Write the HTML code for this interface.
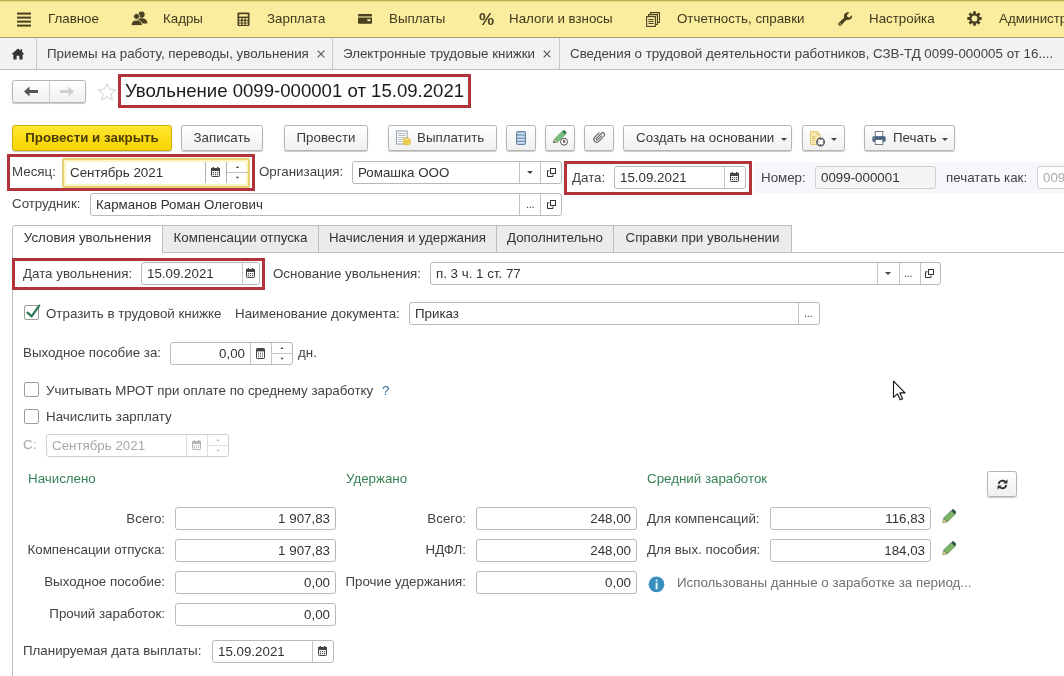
<!DOCTYPE html>
<html lang="ru"><head><meta charset="utf-8">
<style>
*{box-sizing:border-box;margin:0;padding:0}
html,body{width:1064px;height:676px;overflow:hidden;background:#fff}
body{will-change:transform;font-family:"Liberation Sans",Arial,sans-serif;font-size:13.33px;color:#424242;position:relative}
.a{position:absolute;white-space:nowrap}
.t{position:absolute;white-space:nowrap;line-height:16px;height:16px}
#menu{left:0;top:0;width:1064px;height:38px;background:#fbed9e;border-top:1px solid #bfae55;box-shadow:inset 0 1px 0 #e9d985;border-bottom:1px solid #aaa066}
#tabs{left:0;top:38px;width:1064px;height:32px;background:#f1f2f3;border-bottom:1px solid #bdbdbd}
.sep{position:absolute;top:38px;width:1px;height:31px;background:#c9c9c9}
.btn{position:absolute;height:26px;border:1px solid #b4b4b4;border-radius:2.5px;background:linear-gradient(#fff,#f0f0f0);box-shadow:0 1px 1px rgba(0,0,0,.22);text-align:center;line-height:24px;white-space:nowrap;color:#3a3a3a}
.inp{position:absolute;height:23px;border:1px solid #b9b9b9;border-radius:3px;background:#fff;line-height:21px;padding-left:5px;white-space:nowrap;color:#333;overflow:hidden}
.inp.r{text-align:right;padding-right:5px;padding-left:0}
.vs{position:absolute;top:0;width:1px;height:21px;background:#c4c4c4}
.red{position:absolute;border:3px solid #b1333c}
.tab{position:absolute;top:225px;height:27px;border:1px solid #bdbdbd;border-bottom:none;background:#ebebeb;line-height:24px;text-align:center;white-space:nowrap;color:#333}
.grn{color:#37835a}
.cb{position:absolute;width:15px;height:15px;border:1px solid #9d9d9d;border-radius:2px;background:#fff}
</style></head><body>
<div id="menu" class="a"></div>
<div id="tabs" class="a"></div>

<!-- menu text -->
<div class="t" style="left:48px;top:11px;color:#40391f">Главное</div>
<div class="t" style="left:163px;top:11px;color:#40391f">Кадры</div>
<div class="t" style="left:267px;top:11px;color:#40391f">Зарплата</div>
<div class="t" style="left:389px;top:11px;color:#40391f">Выплаты</div>
<div class="t" style="left:509px;top:11px;color:#40391f">Налоги и взносы</div>
<div class="t" style="left:677px;top:11px;color:#40391f">Отчетность, справки</div>
<div class="t" style="left:869px;top:11px;color:#40391f">Настройка</div>
<div class="t" style="left:999px;top:11px;color:#40391f">Администрирование</div>

<!-- tabs text -->
<div class="sep" style="left:36px"></div>
<div class="t" style="left:47px;top:46px">Приемы на работу, переводы, увольнения</div>
<svg class="a" style="left:317px;top:50px" width="8" height="8" viewBox="0 0 8 8"><path d="M0.7 0.7 L7.3 7.3 M7.3 0.7 L0.7 7.3" stroke="#555" stroke-width="1.1" fill="none"/></svg>
<div class="sep" style="left:332px"></div>
<div class="t" style="left:343px;top:46px">Электронные трудовые книжки</div>
<svg class="a" style="left:543px;top:50px" width="8" height="8" viewBox="0 0 8 8"><path d="M0.7 0.7 L7.3 7.3 M7.3 0.7 L0.7 7.3" stroke="#555" stroke-width="1.1" fill="none"/></svg>
<div class="sep" style="left:559px"></div>
<div class="t" style="left:570px;top:46px">Сведения о трудовой деятельности работников, СЗВ-ТД 0099-000005 от 16....</div>



<!-- menu icons -->
<svg class="a" style="left:17px;top:12px" width="14" height="15" viewBox="0 0 14 15"><g fill="#4a4022"><rect x="0" y="0.6" width="14" height="2"/><rect x="0" y="4.6" width="14" height="2"/><rect x="0" y="8.6" width="14" height="2"/><rect x="0" y="12.6" width="14" height="2"/></g></svg>
<svg class="a" style="left:131px;top:11px" width="17" height="15" viewBox="0 0 17 15"><g fill="#4a4022"><circle cx="10.6" cy="3.6" r="3.1"/><path d="M5.5 12.5 C5.5 8.5 8 7.2 10.6 7.2 C13.3 7.2 16.3 8.5 16.3 12 L16.3 12.6 Z"/><circle cx="5.6" cy="5.4" r="3" stroke="#fbed9e" stroke-width="0.8"/><path d="M0.3 14.6 C0.3 10.4 2.6 9.2 5.6 9.2 C8.6 9.2 11.2 10.4 11.2 14.6 Z" stroke="#fbed9e" stroke-width="0.8"/></g></svg>
<svg class="a" style="left:237px;top:12px" width="13" height="15" viewBox="0 0 13 15"><rect x="0.5" y="0.5" width="12" height="13.6" rx="1" fill="#4a4022"/><rect x="2.2" y="2.2" width="8.6" height="2.4" fill="#fbed9e"/><g fill="#fbed9e"><rect x="2.2" y="6" width="2" height="1.8"/><rect x="5.5" y="6" width="2" height="1.8"/><rect x="8.8" y="6" width="2" height="1.8"/><rect x="2.2" y="8.8" width="2" height="1.8"/><rect x="5.5" y="8.8" width="2" height="1.8"/><rect x="8.8" y="8.8" width="2" height="1.8"/><rect x="2.2" y="11.4" width="2" height="1.6"/><rect x="5.5" y="11.4" width="2" height="1.6"/><rect x="8.8" y="11.4" width="2" height="1.6"/></g></svg>
<svg class="a" style="left:358px;top:14px" width="14" height="10.3" viewBox="0 0 15 11"><rect x="0" y="0" width="15" height="10.5" rx="1.2" fill="#4a4022"/><rect x="0" y="2.6" width="15" height="1.2" fill="#fbed9e"/><rect x="10" y="5.6" width="3.4" height="2" fill="#fbed9e"/></svg>
<div class="a" style="left:479px;top:8.5px;font-weight:bold;font-size:17px;line-height:22px;color:#4a4022">%</div>
<svg class="a" style="left:646px;top:12px" width="14" height="15" viewBox="0 0 14 15"><g fill="none" stroke="#4a4022" stroke-width="1.1"><path d="M4.5 2.5 V0.6 H13.4 V10.5 H11.5"/><path d="M2.5 4.5 V2.6 H11.4 V12.5 H9.5"/><rect x="0.6" y="4.6" width="8.8" height="9.8"/><path d="M2.4 7.5 H7.6 M2.4 9.5 H7.6 M2.4 11.5 H7.6"/></g></svg>
<svg class="a" style="left:837.5px;top:12.3px" width="14.6" height="14.2" viewBox="0 0 17 16"><path d="M16.2 3.4 L13.4 6.2 L11 5.6 L10.4 3.2 L13.2 0.4 C11.2 -0.3 9 0.3 7.8 1.9 C6.8 3.3 6.6 5 7.2 6.4 L0.9 12.2 C0 13.1 0 14.4 0.9 15.2 C1.8 16 3.1 16 3.9 15.2 L9.8 8.9 C11.4 9.5 13.3 9.2 14.7 8 C16.1 6.8 16.8 5 16.2 3.4 Z" fill="#4a4022"/><circle cx="2.5" cy="13.6" r="0.9" fill="#fbed9e"/></svg>
<svg class="a" style="left:967px;top:11px" width="15" height="15" viewBox="-7.5 -7.5 15 15"><g fill="#4a4022"><g id="gt"><rect x="-1.4" y="-7.2" width="2.8" height="14.4" rx="0.5"/></g><rect x="-1.4" y="-7.2" width="2.8" height="14.4" rx="0.5" transform="rotate(45)"/><rect x="-1.4" y="-7.2" width="2.8" height="14.4" rx="0.5" transform="rotate(90)"/><rect x="-1.4" y="-7.2" width="2.8" height="14.4" rx="0.5" transform="rotate(135)"/><circle r="5.2"/></g><circle r="2.9" fill="#fbed9e"/></svg>
<!-- home -->
<svg class="a" style="left:11px;top:48px" width="14" height="12" viewBox="0 0 16 14"><path d="M8 0.5 L0.3 7.4 H2.6 V13.5 H6.4 V9 H9.6 V13.5 H13.4 V7.4 H15.7 L12.8 4.8 V1.4 H11 V3.2 Z" fill="#333"/></svg>
<!-- nav buttons -->
<div class="btn" style="left:12px;top:80px;width:74px;height:23px"></div>
<div class="a" style="left:49px;top:81px;width:1px;height:21px;background:#d0d0d0"></div>
<svg class="a" style="left:23px;top:85px" width="16" height="13" viewBox="0 0 16 13"><path d="M1 6.5 L6.5 1.5 V5 H15 V8 H6.5 V11.5 Z" fill="#555"/></svg>
<svg class="a" style="left:59px;top:85px" width="16" height="13" viewBox="0 0 16 13"><path d="M15 6.5 L9.5 1.5 V5 H1 V8 H9.5 V11.5 Z" fill="#d0d0d0"/></svg>
<svg class="a" style="left:97px;top:82px" width="20" height="19" viewBox="0 0 20 19"><path d="M10 1.5 L12.5 7.2 L18.7 7.8 L14 11.9 L15.4 18 L10 14.8 L4.6 18 L6 11.9 L1.3 7.8 L7.5 7.2 Z" fill="#fff" stroke="#d9d9d9" stroke-width="1.2" stroke-linejoin="round"/></svg>
<div class="red" style="left:118px;top:74px;width:353px;height:34px;border-width:3px"></div>
<div class="a" style="left:125px;top:79px;font-size:18.6px;line-height:24px;color:#1a1a1a">Увольнение 0099-000001 от 15.09.2021</div>

<!-- command bar -->
<div class="btn" style="left:12px;top:125px;width:160px;background:linear-gradient(#ffe630,#f7d400);border-color:#c9ad00;font-weight:bold;color:#4a3c00">Провести и закрыть</div>
<div class="btn" style="left:181px;top:125px;width:82px">Записать</div>
<div class="btn" style="left:284px;top:125px;width:84px">Провести</div>
<div class="btn" style="left:388px;top:125px;width:109px;text-align:left;padding-left:28px">Выплатить</div>
<div class="btn" style="left:506px;top:125px;width:30px"></div>
<div class="btn" style="left:545px;top:125px;width:30px"></div>
<div class="btn" style="left:584px;top:125px;width:30px"></div>
<div class="btn" style="left:623px;top:125px;width:169px;text-align:left;padding-left:12px">Создать на основании</div>
<div class="btn" style="left:802px;top:125px;width:43px"></div>
<div class="btn" style="left:864px;top:125px;width:91px;text-align:left;padding-left:28px">Печать</div>


<!-- cmd icons -->
<svg class="a" style="left:396px;top:130px" width="16" height="16" viewBox="0 0 16 16"><rect x="0.5" y="1" width="10.6" height="13" fill="#fcfcfd" stroke="#93a0b0" stroke-width="1"/><path d="M2.2 3.5 H9.4 M2.2 5.5 H9.4 M2.2 7.5 H9.4 M2.2 9.5 H6.5 M2.2 11.5 H6" stroke="#a9b3bf" stroke-width="0.9"/><g fill="#f7dc6a" stroke="#d3a92a" stroke-width="0.6"><ellipse cx="10.8" cy="13.2" rx="3.8" ry="1.7"/><ellipse cx="10.8" cy="11.4" rx="3.8" ry="1.7"/><ellipse cx="10.8" cy="9.6" rx="3.8" ry="1.7"/></g></svg>
<svg class="a" style="left:516px;top:131px" width="10" height="14" viewBox="0 0 10 14"><rect x="0.5" y="0.5" width="9" height="13" rx="1.2" fill="#6d8fb0" stroke="#6687a8"/><g fill="#cfe1f1"><rect x="1.2" y="1.4" width="7.6" height="2"/><rect x="1.2" y="4.6" width="7.6" height="2"/><rect x="1.2" y="7.8" width="7.6" height="2"/><rect x="1.2" y="11" width="7.6" height="1.8"/></g></svg>
<svg class="a" style="left:552px;top:129px" width="20" height="20" viewBox="0 0 20 20"><path d="M1.4 13.6 L2.6 10 L10.2 2.4 L13.2 5.4 L5.6 13 Z" fill="#79bd7b" stroke="#4f9a5c" stroke-width="0.7"/><path d="M10.2 2.4 L11.2 1.4 C11.6 1 12.2 1 12.6 1.4 L14.2 3 C14.6 3.4 14.6 4 14.2 4.4 L13.2 5.4 Z" fill="#2f7d4b"/><path d="M1.4 13.6 L2.6 10 L5.6 13 Z" fill="#e9dcb4" stroke="#7a6a45" stroke-width="0.5"/><path d="M1.4 13.6 L2 11.9 L3.3 13.1 Z" fill="#444"/><circle cx="12" cy="12.7" r="3.5" fill="#fff" stroke="#444" stroke-width="0.9"/><path d="M11.8 10.8 V13 H13.6" fill="none" stroke="#222" stroke-width="1.2"/></svg>
<svg class="a" style="left:591px;top:129px" width="16" height="16" viewBox="-8 -8 16 16"><path transform="rotate(45)" d="M-2.9 -3 V3.2 A2.9 2.9 0 0 0 2.9 3.2 V-4.3 A1.9 1.9 0 0 0 -0.9 -4.3 V2.9 A0.95 0.95 0 0 0 1 2.9 V-2.6" fill="none" stroke="#555" stroke-width="1" stroke-linecap="round"/></svg>
<svg class="a" style="left:780.5px;top:137.5px" width="6" height="3" viewBox="0 0 6 3"><path d="M0 0 H6 L3 3 Z" fill="#444"/></svg>
<svg class="a" style="left:810px;top:130.5px" width="16" height="16" viewBox="0 0 16 16"><path d="M0.5 0.5 H7 L10 3.5 V13.5 H0.5 Z" fill="#f8e9b0" stroke="#dcc46c" stroke-width="0.9"/><path d="M7 0.5 V3.5 H10" fill="none" stroke="#dcc46c" stroke-width="0.9"/><path d="M2.4 5.5 H5 M2.4 7.5 H5.5 M2.4 9.5 H4.5" stroke="#cdb45a" stroke-width="0.9"/><circle cx="10.6" cy="11" r="3.7" fill="#fff" stroke="#5a5f6a" stroke-width="1.5"/><path d="M10.6 7.2 V9 M10.6 13 V14.8 M6.8 11 H8.6 M12.6 11 H14.4" stroke="#5a5f6a" stroke-width="1.1"/></svg>
<svg class="a" style="left:830.5px;top:137.5px" width="6" height="3" viewBox="0 0 6 3"><path d="M0 0 H6 L3 3 Z" fill="#444"/></svg>
<svg class="a" style="left:872px;top:130.5px" width="14" height="14" viewBox="0 0 14 14"><rect x="3.2" y="0.5" width="7.6" height="5.5" fill="#fff" stroke="#5d6d7e" stroke-width="0.9"/><rect x="0.4" y="5.2" width="13.2" height="5.6" rx="1.3" fill="#47637f"/><rect x="3.2" y="8.4" width="7.6" height="5.1" fill="#fff" stroke="#5d6d7e" stroke-width="0.9"/><rect x="1.6" y="6.4" width="1.2" height="1" fill="#b9d0e4"/></svg>
<svg class="a" style="left:941.5px;top:137.5px" width="6" height="3" viewBox="0 0 6 3"><path d="M0 0 H6 L3 3 Z" fill="#444"/></svg>
<!-- row 2 -->
<div class="red" style="left:7px;top:154px;width:248px;height:37px;border-width:3px"></div>
<div class="t" style="left:12px;top:164px">Месяц:</div>
<div class="inp" style="left:62px;top:158px;width:188px;height:30px;border:2px solid #e8d274;border-radius:2px;box-shadow:inset 0 0 0 2px #fdf4c4;line-height:25px;padding-left:6px">Сентябрь 2021
  <div class="vs" style="left:141px;top:2px;height:21px;background:#b0b0b0"></div><div class="vs" style="left:162px;top:2px;height:21px;background:#b0b0b0"></div>
</div>
<div class="t" style="left:259px;top:164px">Организация:</div>
<div class="inp" style="left:352px;top:161px;width:210px">Ромашка ООО<div class="vs" style="left:166px"></div><div class="vs" style="left:187px"></div></div>
<div class="t" style="left:12px;top:196px">Сотрудник:</div>
<div class="inp" style="left:90px;top:193px;width:472px">Карманов Роман Олегович<div class="vs" style="left:428px"></div><div class="vs" style="left:449px"></div><div class="a" style="left:435px;top:0px;color:#444;font-size:11px;letter-spacing:-0.3px">...</div></div>

<div class="red" style="left:564px;top:161px;width:188px;height:34px;border-width:3px"></div>
<div class="t" style="left:572px;top:170px">Дата:</div>
<div class="inp" style="left:614px;top:166px;width:132px">15.09.2021<div class="vs" style="left:109px"></div></div>
<div class="a" style="left:754px;top:162px;width:310px;height:31px;background:#f6f7fb"></div>
<div class="t" style="left:761px;top:170px">Номер:</div>
<div class="inp" style="left:815px;top:166px;width:121px;background:#f5f5f5;border-color:#cfcfcf">0099-000001</div>
<div class="t" style="left:946px;top:170px">печатать как:</div>
<div class="inp" style="left:1037px;top:166px;width:60px;color:#aaa;border-color:#cfcfcf">0099</div>

<!-- tab strip -->
<div class="a" style="left:12px;top:252px;width:1052px;height:1px;background:#bdbdbd"></div>
<div class="a" style="left:12px;top:252px;width:1px;height:424px;background:#bdbdbd"></div>
<div class="tab" style="left:12px;width:151px;background:#fff;height:28px;border-top-left-radius:3px">Условия увольнения</div>
<div class="tab" style="left:162px;width:157px">Компенсации отпуска</div>
<div class="tab" style="left:318px;width:179px">Начисления и удержания</div>
<div class="tab" style="left:496px;width:118px">Дополнительно</div>
<div class="tab" style="left:613px;width:179px">Справки при увольнении</div>

<!-- tab content -->
<div class="red" style="left:12px;top:258px;width:253px;height:32px"></div>
<div class="t" style="left:23px;top:266px">Дата увольнения:</div>
<div class="inp" style="left:141px;top:262px;width:119px">15.09.2021<div class="vs" style="left:100px"></div></div>
<div class="t" style="left:273px;top:266px">Основание увольнения:</div>
<div class="inp" style="left:430px;top:262px;width:511px">п. 3 ч. 1 ст. 77<div class="vs" style="left:446px"></div><div class="vs" style="left:468px"></div><div class="vs" style="left:489px"></div><div class="a" style="left:473px;top:0px;color:#444;font-size:11px;letter-spacing:-0.3px">...</div></div>

<div class="cb" style="left:24px;top:305px"></div>
<div class="t" style="left:46px;top:306px">Отразить в трудовой книжке</div>
<div class="t" style="left:235px;top:306px">Наименование документа:</div>
<div class="inp" style="left:409px;top:302px;width:411px">Приказ<div class="vs" style="left:388px"></div><div class="a" style="left:394px;top:0px;color:#444;font-size:11px;letter-spacing:-0.3px">...</div></div>

<div class="t" style="left:23px;top:345px">Выходное пособие за:</div>
<div class="inp" style="left:170px;top:342px;width:123px"><span class="a" style="right:47px;top:0">0,00</span><div class="vs" style="left:79px"></div><div class="vs" style="left:100px"></div></div>
<div class="t" style="left:298px;top:345px">дн.</div>

<div class="cb" style="left:24px;top:382px"></div>
<div class="t" style="left:46px;top:383px">Учитывать МРОТ при оплате по среднему заработку</div>
<div class="t" style="left:382px;top:383px;color:#2f6f9f">?</div>
<div class="cb" style="left:24px;top:409px"></div>
<div class="t" style="left:46px;top:409px">Начислить зарплату</div>

<div class="t" style="left:23px;top:437px;color:#aaa">С:</div>
<div class="inp" style="left:46px;top:434px;width:183px;color:#a8a8a8;border-color:#cfcfcf">Сентябрь 2021<div class="vs" style="left:139px;background:#ddd"></div><div class="vs" style="left:160px;background:#ddd"></div></div>

<div class="t grn" style="left:28px;top:471px">Начислено</div>
<div class="t grn" style="left:346px;top:471px">Удержано</div>
<div class="t grn" style="left:647px;top:471px">Средний заработок</div>
<div class="btn" style="left:987px;top:471px;width:30px;height:26px"></div>

<div class="t" style="right:899px;top:511px">Всего:</div>
<div class="inp r" style="left:175px;top:507px;width:161px">1 907,83</div>
<div class="t" style="right:899px;top:542px">Компенсации отпуска:</div>
<div class="inp r" style="left:175px;top:539px;width:161px">1 907,83</div>
<div class="t" style="right:899px;top:574px">Выходное пособие:</div>
<div class="inp r" style="left:175px;top:571px;width:161px">0,00</div>
<div class="t" style="right:899px;top:606px">Прочий заработок:</div>
<div class="inp r" style="left:175px;top:603px;width:161px">0,00</div>

<div class="t" style="right:598px;top:511px">Всего:</div>
<div class="inp r" style="left:476px;top:507px;width:161px">248,00</div>
<div class="t" style="right:598px;top:542px">НДФЛ:</div>
<div class="inp r" style="left:476px;top:539px;width:161px">248,00</div>
<div class="t" style="right:598px;top:574px">Прочие удержания:</div>
<div class="inp r" style="left:476px;top:571px;width:161px">0,00</div>

<div class="t" style="left:647px;top:511px">Для компенсаций:</div>
<div class="inp r" style="left:770px;top:507px;width:161px">116,83</div>
<div class="t" style="left:647px;top:542px">Для вых. пособия:</div>
<div class="inp r" style="left:770px;top:539px;width:161px">184,03</div>
<div class="t" style="left:677px;top:575px;color:#707070">Использованы данные о заработке за период...</div>

<div class="t" style="left:23px;top:643px">Планируемая дата выплаты:</div>
<div class="inp" style="left:212px;top:640px;width:122px">15.09.2021<div class="vs" style="left:99px"></div></div>
<!-- small icons -->
<svg class="a" style="left:211px;top:167px" width="9" height="10" viewBox="0 0 9 10"><rect x="0.5" y="1.5" width="8" height="8" rx="0.8" fill="#fff" stroke="#444" stroke-width="1"/><rect x="0" y="1" width="9" height="3" fill="#444"/><rect x="1.6" y="0" width="1.4" height="2" fill="#444"/><rect x="6" y="0" width="1.4" height="2" fill="#444"/><g fill="#444"><rect x="1.8" y="5" width="1.2" height="1.2"/><rect x="3.9" y="5" width="1.2" height="1.2"/><rect x="6" y="5" width="1.2" height="1.2"/><rect x="1.8" y="7" width="1.2" height="1.2"/><rect x="3.9" y="7" width="1.2" height="1.2"/><rect x="6" y="7" width="1.2" height="1.2"/></g></svg><svg class="a" style="left:227px;top:160px" width="21" height="25" viewBox="0 0 21 25"><path d="M0 12.5 H21" stroke="#c4c4c4" stroke-width="1"/><path d="M8.9 7.9 L10.5 5.9 L12.1 7.9 Z" fill="#444"/><path d="M8.9 16.7 L10.5 18.7 L12.1 16.7 Z" fill="#444"/></svg><svg class="a" style="left:527px;top:171px" width="6" height="3" viewBox="0 0 6 3"><path d="M0 0 H6 L3 3 Z" fill="#444"/></svg><svg class="a" style="left:547px;top:168px" width="9" height="9" viewBox="0 0 9 9"><rect x="3.5" y="0.5" width="5" height="5" fill="#fff" stroke="#333" stroke-width="1"/><path d="M2.5 2.8 H0.5 V8.5 H6 V6.5" fill="none" stroke="#333" stroke-width="1"/></svg><svg class="a" style="left:547px;top:200px" width="9" height="9" viewBox="0 0 9 9"><rect x="3.5" y="0.5" width="5" height="5" fill="#fff" stroke="#333" stroke-width="1"/><path d="M2.5 2.8 H0.5 V8.5 H6 V6.5" fill="none" stroke="#333" stroke-width="1"/></svg><svg class="a" style="left:730px;top:172px" width="9" height="10" viewBox="0 0 9 10"><rect x="0.5" y="1.5" width="8" height="8" rx="0.8" fill="#fff" stroke="#444" stroke-width="1"/><rect x="0" y="1" width="9" height="3" fill="#444"/><rect x="1.6" y="0" width="1.4" height="2" fill="#444"/><rect x="6" y="0" width="1.4" height="2" fill="#444"/><g fill="#444"><rect x="1.8" y="5" width="1.2" height="1.2"/><rect x="3.9" y="5" width="1.2" height="1.2"/><rect x="6" y="5" width="1.2" height="1.2"/><rect x="1.8" y="7" width="1.2" height="1.2"/><rect x="3.9" y="7" width="1.2" height="1.2"/><rect x="6" y="7" width="1.2" height="1.2"/></g></svg><svg class="a" style="left:246px;top:268px" width="9" height="10" viewBox="0 0 9 10"><rect x="0.5" y="1.5" width="8" height="8" rx="0.8" fill="#fff" stroke="#444" stroke-width="1"/><rect x="0" y="1" width="9" height="3" fill="#444"/><rect x="1.6" y="0" width="1.4" height="2" fill="#444"/><rect x="6" y="0" width="1.4" height="2" fill="#444"/><g fill="#444"><rect x="1.8" y="5" width="1.2" height="1.2"/><rect x="3.9" y="5" width="1.2" height="1.2"/><rect x="6" y="5" width="1.2" height="1.2"/><rect x="1.8" y="7" width="1.2" height="1.2"/><rect x="3.9" y="7" width="1.2" height="1.2"/><rect x="6" y="7" width="1.2" height="1.2"/></g></svg><svg class="a" style="left:885px;top:272px" width="6" height="3" viewBox="0 0 6 3"><path d="M0 0 H6 L3 3 Z" fill="#444"/></svg><svg class="a" style="left:925px;top:269px" width="9" height="9" viewBox="0 0 9 9"><rect x="3.5" y="0.5" width="5" height="5" fill="#fff" stroke="#333" stroke-width="1"/><path d="M2.5 2.8 H0.5 V8.5 H6 V6.5" fill="none" stroke="#333" stroke-width="1"/></svg><svg class="a" style="left:256px;top:348px" width="9" height="11" viewBox="0 0 9 11"><rect x="0.5" y="0.5" width="8" height="10" rx="0.6" fill="#fff" stroke="#444"/><rect x="1" y="1" width="7" height="2.4" fill="#444"/><g fill="#555"><rect x="2" y="4.6" width="1" height="1"/><rect x="4" y="4.6" width="1" height="1"/><rect x="6" y="4.6" width="1" height="1"/><rect x="2" y="6.4" width="1" height="1"/><rect x="4" y="6.4" width="1" height="1"/><rect x="6" y="6.4" width="1" height="1"/><rect x="2" y="8.2" width="1" height="1"/><rect x="4" y="8.2" width="1" height="1"/><rect x="6" y="8.2" width="1" height="1"/></g></svg><svg class="a" style="left:272px;top:343px" width="20" height="21" viewBox="0 0 20 21"><path d="M0 10.5 H20" stroke="#c4c4c4" stroke-width="1"/><path d="M8.4 5.9 L10.0 3.9000000000000004 L11.6 5.9 Z" fill="#444"/><path d="M8.4 14.7 L10.0 16.7 L11.6 14.7 Z" fill="#444"/></svg><svg class="a" style="left:192px;top:440px" width="9" height="10" viewBox="0 0 9 10"><rect x="0.5" y="1.5" width="8" height="8" rx="0.8" fill="#fff" stroke="#b5b5b5" stroke-width="1"/><rect x="0" y="1" width="9" height="3" fill="#b5b5b5"/><rect x="1.6" y="0" width="1.4" height="2" fill="#b5b5b5"/><rect x="6" y="0" width="1.4" height="2" fill="#b5b5b5"/><g fill="#b5b5b5"><rect x="1.8" y="5" width="1.2" height="1.2"/><rect x="3.9" y="5" width="1.2" height="1.2"/><rect x="6" y="5" width="1.2" height="1.2"/><rect x="1.8" y="7" width="1.2" height="1.2"/><rect x="3.9" y="7" width="1.2" height="1.2"/><rect x="6" y="7" width="1.2" height="1.2"/></g></svg><svg class="a" style="left:208px;top:435px" width="20" height="21" viewBox="0 0 20 21"><path d="M0 10.5 H20" stroke="#ddd" stroke-width="1"/><path d="M8.4 5.9 L10.0 3.9000000000000004 L11.6 5.9 Z" fill="#bbb"/><path d="M8.4 14.7 L10.0 16.7 L11.6 14.7 Z" fill="#bbb"/></svg><svg class="a" style="left:318px;top:646px" width="9" height="10" viewBox="0 0 9 10"><rect x="0.5" y="1.5" width="8" height="8" rx="0.8" fill="#fff" stroke="#444" stroke-width="1"/><rect x="0" y="1" width="9" height="3" fill="#444"/><rect x="1.6" y="0" width="1.4" height="2" fill="#444"/><rect x="6" y="0" width="1.4" height="2" fill="#444"/><g fill="#444"><rect x="1.8" y="5" width="1.2" height="1.2"/><rect x="3.9" y="5" width="1.2" height="1.2"/><rect x="6" y="5" width="1.2" height="1.2"/><rect x="1.8" y="7" width="1.2" height="1.2"/><rect x="3.9" y="7" width="1.2" height="1.2"/><rect x="6" y="7" width="1.2" height="1.2"/></g></svg><svg class="a" style="left:941.5px;top:508.5px" width="14.5" height="14.5" viewBox="0 0 14 14"><path d="M0.6 13.4 L1.6 9.2 L4.8 12.4 Z" fill="#ead9a6" stroke="#8b6f3a" stroke-width="0.6"/><path d="M1.4 9 L8.8 1.6 L12.4 5.2 L5 12.6 Z" fill="#7db36b" stroke="#4f8247" stroke-width="0.7"/><path d="M8.8 1.6 L10 0.4 C10.4 0 11 0 11.4 0.4 L13.6 2.6 C14 3 14 3.6 13.6 4 L12.4 5.2 Z" fill="#2d5a3c"/></svg><svg class="a" style="left:941.5px;top:540.5px" width="14.5" height="14.5" viewBox="0 0 14 14"><path d="M0.6 13.4 L1.6 9.2 L4.8 12.4 Z" fill="#ead9a6" stroke="#8b6f3a" stroke-width="0.6"/><path d="M1.4 9 L8.8 1.6 L12.4 5.2 L5 12.6 Z" fill="#7db36b" stroke="#4f8247" stroke-width="0.7"/><path d="M8.8 1.6 L10 0.4 C10.4 0 11 0 11.4 0.4 L13.6 2.6 C14 3 14 3.6 13.6 4 L12.4 5.2 Z" fill="#2d5a3c"/></svg><svg class="a" style="left:24px;top:303px" width="18" height="18" viewBox="0 0 18 18"><path d="M3.6 9.6 L7.6 13.4 L15.2 2.6" fill="none" stroke="#2e7d57" stroke-width="2.3" stroke-linecap="round" stroke-linejoin="round"/></svg><svg class="a" style="left:648px;top:576px" width="17" height="17" viewBox="0 0 17 17"><circle cx="8.5" cy="8.3" r="7.9" fill="#3b8fbe"/><rect x="7.6" y="3.4" width="2" height="2" rx="0.6" fill="#dff3fb"/><rect x="7.6" y="6.6" width="2" height="6.6" rx="0.5" fill="#dff3fb"/></svg><svg class="a" style="left:996.5px;top:478.5px" width="11" height="11" viewBox="0 0 12 12"><g fill="none" stroke="#333" stroke-width="2"><path d="M1.8 5.4 A4.3 4.3 0 0 1 9 3.2"/><path d="M10.2 6.6 A4.3 4.3 0 0 1 3 8.8"/></g><path d="M11.4 0.4 V5 H6.8 Z" fill="#333"/><path d="M0.6 11.6 V7 H5.2 Z" fill="#333"/></svg><svg class="a" style="left:890px;top:378px" width="20" height="25" viewBox="0 0 20 25"><path d="M3.5 3.2 V19.4 L7.4 15.8 L10.2 21.8 L12.6 20.7 L9.9 14.9 H15 Z" fill="#fff" stroke="#111" stroke-width="1.1" stroke-linejoin="round"/></svg>
</body></html>
